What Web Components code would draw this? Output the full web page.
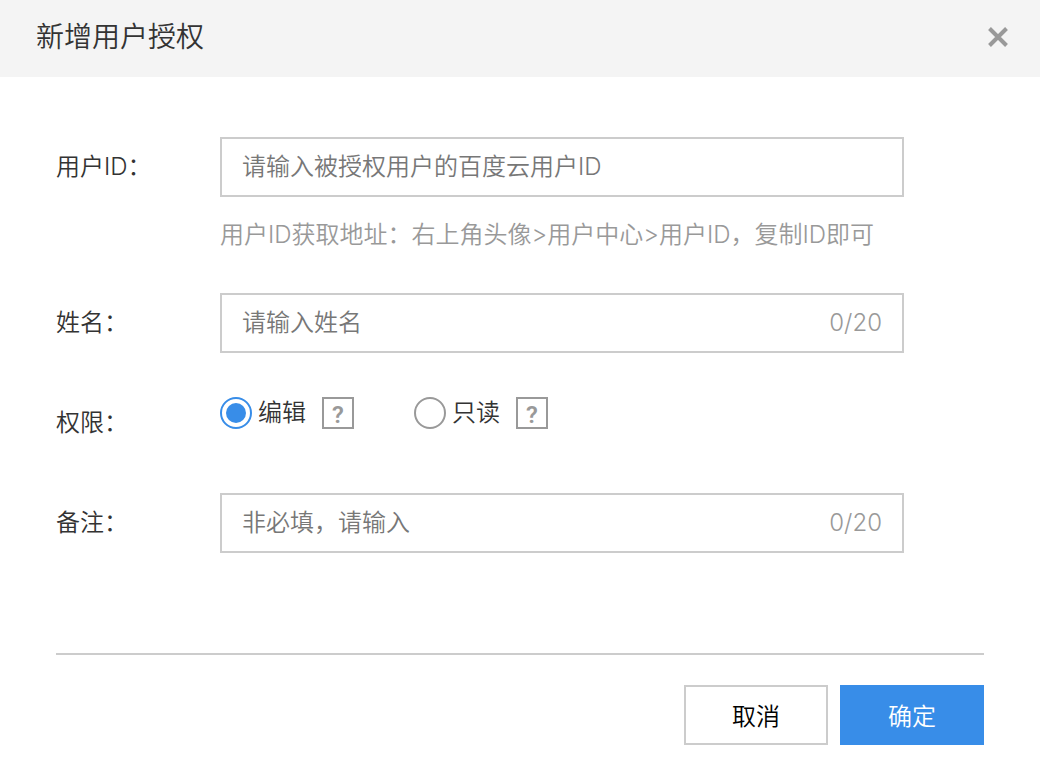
<!DOCTYPE html>
<html lang="zh-CN">
<head>
<meta charset="utf-8">
<meta name="viewport" content="width=device-width, initial-scale=1">
<title>新增用户授权</title>
<style>
  body {
    margin: 0;
    background: #fff;
    color: #333;
    font: 350 24px/36px Inter, "Noto Sans CJK SC", sans-serif;
  }
</style>
</head>
<body>
<auth-dialog heading="新增用户授权">
  <text-field label="用户ID：" placeholder="请输入被授权用户的百度云用户ID">用户ID获取地址：右上角头像&gt;用户中心&gt;用户ID，复制ID即可</text-field>
  <text-field label="姓名：" placeholder="请输入姓名" limit="20"></text-field>
  <radio-field label="权限：" options="编辑,只读"></radio-field>
  <text-field label="备注：" placeholder="非必填，请输入" limit="20"></text-field>
  <action-button slot="actions">取消</action-button>
  <action-button slot="actions" primary>确定</action-button>
</auth-dialog>

<script>
class AuthDialog extends HTMLElement {
  constructor() {
    super();
    this.attachShadow({ mode: "open" }).innerHTML = `
      <style>
        :host { display: block; }
        header {
          display: flex; align-items: center; justify-content: space-between;
          box-sizing: border-box; height: 77px; padding: 0 30px 4px 36px;
          background: #f4f4f4;
        }
        h1 { margin: 0; font-size: 28px; font-weight: 350; line-height: 40px; }
        .close { display: flex; padding: 0; border: 0; background: none; color: #999; cursor: pointer; }
        form { margin: 0; padding: 60px 56px 27px; }
        .fields { display: grid; gap: 40px; padding: 0 80px 100px 0; }
        footer {
          display: flex; justify-content: flex-end; gap: 12px;
          padding-top: 30px; border-top: 2px solid #ccc;
        }
      </style>
      <section role="dialog" aria-labelledby="heading">
        <header>
          <h1 id="heading"></h1>
          <button class="close" type="button" aria-label="关闭">
            <svg width="24" height="24" viewBox="0 0 24 24" fill="none" stroke="currentColor" stroke-width="4">
              <path d="M3.5 3.5 20.5 20.5M20.5 3.5 3.5 20.5"/>
            </svg>
          </button>
        </header>
        <form>
          <div class="fields"><slot></slot></div>
          <footer><slot name="actions"></slot></footer>
        </form>
      </section>`;
    this.shadowRoot.querySelector("h1").textContent = this.getAttribute("heading");
    this.shadowRoot.querySelector(".close").addEventListener("click", () => { this.hidden = true; });
  }
}

const rowStyle = `
  :host { display: grid; grid-template-columns: 164px minmax(0, 1fr); align-items: start; }
  .label { line-height: 60px; }
`;

class TextField extends HTMLElement {
  constructor() {
    super();
    const limit = this.getAttribute("limit");
    this.attachShadow({ mode: "open" }).innerHTML = `
      <style>
        ${rowStyle}
        .box {
          display: flex; align-items: center; box-sizing: border-box; height: 60px;
          padding: 0 20px; border: 2px solid #ccc; background: #fff;
        }
        .box:focus-within { border-color: #388de8; }
        input {
          flex: 1; min-width: 0; height: 36px; padding: 0; border: 0; outline: 0;
          background: none; color: #333; font: inherit;
        }
        input::placeholder { color: #777; opacity: 1; }
        .count { color: #999; }
        .hint { margin-top: 20px; color: #999; }
      </style>
      <label class="label" for="field"></label>
      <div>
        <div class="box">
          <input id="field" type="text">
          ${limit ? `<span class="count">0/${limit}</span>` : ""}
        </div>
        ${this.textContent.trim() ? `<div class="hint"><slot></slot></div>` : ""}
      </div>`;
    const input = this.shadowRoot.querySelector("input");
    this.shadowRoot.querySelector("label").textContent = this.getAttribute("label");
    input.placeholder = this.getAttribute("placeholder");
    if (limit) {
      input.maxLength = Number(limit);
      input.addEventListener("input", () => {
        this.shadowRoot.querySelector(".count").textContent = `${input.value.length}/${limit}`;
      });
    }
  }
}

class HelpMark extends HTMLElement {
  constructor() {
    super();
    this.attachShadow({ mode: "open" }).innerHTML = `
      <style>
        :host { display: block; }
        button {
          display: block; box-sizing: border-box; width: 32px; height: 32px; padding: 2px 0 0;
          border: 2px solid #999; background: #fff; color: #999; cursor: pointer;
          font: 600 24px/28px Roboto, sans-serif;
        }
      </style>
      <button type="button">?</button>`;
  }
}

class RadioField extends HTMLElement {
  constructor() {
    super();
    const options = this.getAttribute("options").split(",");
    this.attachShadow({ mode: "open" }).innerHTML = `
      <style>
        ${rowStyle}
        .group { display: flex; gap: 60px; height: 40px; }
        .option { display: flex; align-items: center; gap: 16px; }
        .option label { display: flex; align-items: center; gap: 6px; }
        input {
          appearance: none; box-sizing: border-box; width: 32px; height: 32px; margin: 0;
          padding: 4px; border: 2px solid #999; border-radius: 50%;
        }
        input:checked { border-color: #388de8; background: #388de8 content-box; }
      </style>
      <span class="label" id="name"></span>
      <div class="group" role="radiogroup" aria-labelledby="name">
        ${options.map((text, i) => `
          <div class="option">
            <label><input type="radio" name="access" ${i === 0 ? "checked" : ""}><span>${text}</span></label>
            <help-mark></help-mark>
          </div>`).join("")}
      </div>`;
    this.shadowRoot.querySelector("#name").textContent = this.getAttribute("label");
  }
}

class ActionButton extends HTMLElement {
  constructor() {
    super();
    this.attachShadow({ mode: "open" }).innerHTML = `
      <style>
        :host { display: block; }
        button {
          display: block; box-sizing: border-box; width: 144px; height: 60px; padding: 4px 0 0;
          border: 2px solid #ccc; background: #fff; color: #000; cursor: pointer;
          font: inherit;
        }
        :host([primary]) button { border-color: #388de8; background: #388de8; color: #fff; }
      </style>
      <button type="button"><slot></slot></button>`;
  }
}

customElements.define("help-mark", HelpMark);
customElements.define("action-button", ActionButton);
customElements.define("text-field", TextField);
customElements.define("radio-field", RadioField);
customElements.define("auth-dialog", AuthDialog);
</script>
</body>
</html>
